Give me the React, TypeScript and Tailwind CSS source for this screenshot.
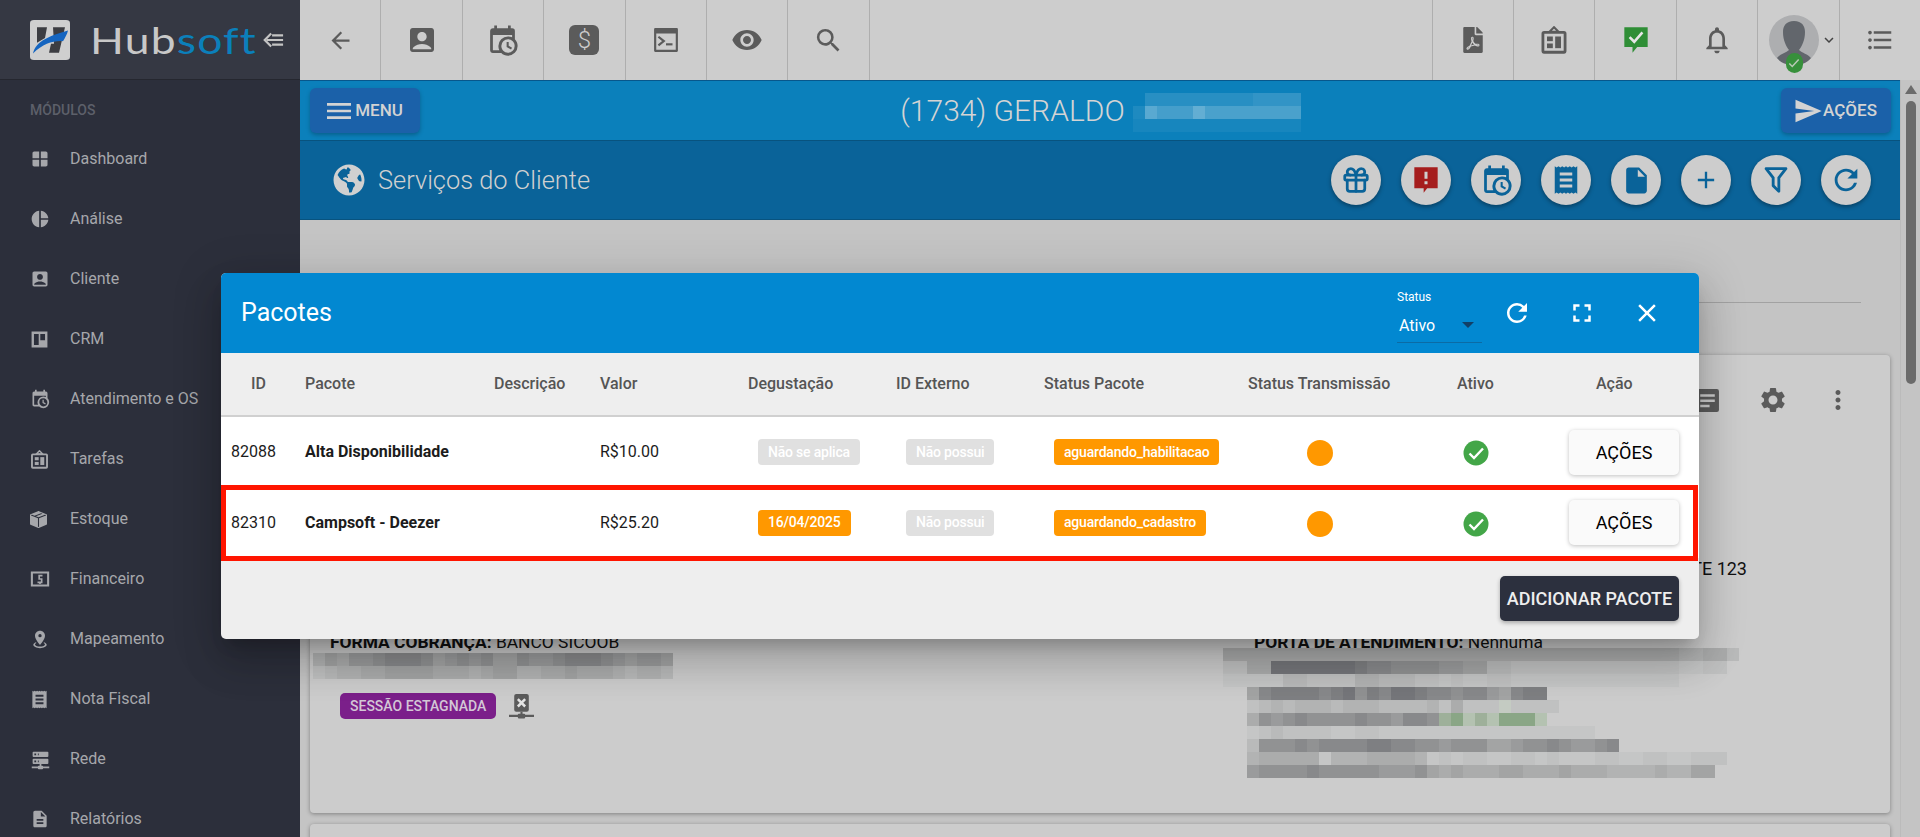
import { Gift } from "lucide-react";
import { BsBoxSeamFill } from "react-icons/bs";
import { FaFilePdf, FaGlobeAmericas } from "react-icons/fa";
import {
  MdAccountBox,
  MdAdd,
  MdArrowBack,
  MdClose,
  MdDescription,
  MdFormatListBulleted,
  MdFullscreen,
  MdInsertDriveFile,
  MdKeyboardArrowDown,
  MdMenu,
  MdOutlineNotifications,
  MdPieChart,
  MdRefresh,
  MdSearch,
  MdSend,
  MdSettings,
  MdMoreVert,
  MdVisibility,
  MdWindow,
} from "react-icons/md";

type IconProps = { className?: string };

const CalendarClock = ({ className }: IconProps) => (
  <svg viewBox="0 0 24 24" fill="currentColor" className={className}>
    <path d="M15,13H16.5V15.82L18.94,17.23L18.19,18.53L15,16.69V13M19,8H5V19H9.67C9.24,18.09 9,17.07 9,16A7,7 0 0,1 16,9C17.07,9 18.09,9.24 19,9.67V8M5,21C3.89,21 3,20.1 3,19V5C3,3.89 3.89,3 5,3H6V1H8V3H16V1H18V3H19A2,2 0 0,1 21,5V11.1C22.24,12.36 23,14.09 23,16A7,7 0 0,1 16,23C14.09,23 12.36,22.24 11.1,21H5M16,11.15A4.85,4.85 0 0,0 11.15,16C11.15,18.68 13.32,20.85 16,20.85A4.85,4.85 0 0,0 20.85,16C20.85,13.32 18.68,11.15 16,11.15Z" />
  </svg>
);

const Terminal = ({ className }: IconProps) => (
  <svg viewBox="0 0 24 24" className={className}>
    <path
      fill="currentColor"
      fillRule="evenodd"
      d="M2 1h20a1 1 0 0 1 1 1v20a1 1 0 0 1-1 1H2a1 1 0 0 1-1-1V2a1 1 0 0 1 1-1zm1 5v15h18V6H3z"
    />
    <path d="M5 9l5 4-5 4" fill="none" stroke="currentColor" strokeWidth="2" />
    <path d="M12 16h6" stroke="currentColor" strokeWidth="2" />
  </svg>
);

const Board = ({ className }: IconProps) => (
  <svg viewBox="0 0 24 24" fill="none" className={className}>
    <path d="M12 1L8 5h8z" stroke="currentColor" strokeWidth="1.8" />
    <rect x="2.5" y="5.5" width="19" height="17" rx="1" stroke="currentColor" strokeWidth="2.4" />
    <rect x="6" y="9" width="5" height="4" fill="currentColor" />
    <rect x="6" y="15" width="5" height="4" fill="currentColor" />
    <rect x="13" y="9" width="5" height="10" fill="currentColor" />
  </svg>
);

const ChatCheck = ({ className }: IconProps) => (
  <svg viewBox="0 0 24 24" className={className}>
    <path fill="currentColor" d="M2 1h20v17h-9l-4 5v-5H2z" />
    <path d="M6.5 9.5l4 4 7-8" fill="none" stroke="#e6e6e6" strokeWidth="2.2" />
  </svg>
);

const ChatAlert = ({ className }: IconProps) => (
  <svg viewBox="0 0 24 24" className={className}>
    <path fill="currentColor" d="M2 1h20v18h-9l-3 4v-4H2z" />
    <path d="M10.7 5h2.6v6h-2.6zM10.7 13h2.6v2.6h-2.6z" fill="#cfcfcf" />
  </svg>
);

const Receipt = ({ className }: IconProps) => (
  <svg viewBox="0 0 24 24" className={className}>
    <path
      fill="currentColor"
      fillRule="evenodd"
      d="M3 1l1.5 1L6 1l1.5 1L9 1l1.5 1L12 1l1.5 1L15 1l1.5 1L18 1l1.5 1L21 1v22l-1.5-1-1.5 1-1.5-1-1.5 1-1.5-1-1.5 1-1.5-1L9 23l-1.5-1L6 23l-1.5-1L3 23zM7 6v2.4h10V6zm0 4.8v2.4h10v-2.4zm0 4.8V18h10v-2.4z"
    />
  </svg>
);

const Kanban = ({ className }: IconProps) => (
  <svg viewBox="0 0 24 24" className={className}>
    <path
      fill="currentColor"
      fillRule="evenodd"
      d="M2 2h20v20H2zM5 5v14h6V5zm8 0v8h6V5z"
    />
  </svg>
);

const Money = ({ className }: IconProps) => (
  <svg viewBox="0 0 24 24" className={className}>
    <path
      fill="currentColor"
      fillRule="evenodd"
      d="M1 3h22v18H1zm2.5 2.5v13h17v-13zM10 7h5v2h-3v2h3v6h-2v1h-2v-1H9v-2h4v-2H10V7h1z"
    />
  </svg>
);

const MapPin = ({ className }: IconProps) => (
  <svg viewBox="0 0 24 24" fill="currentColor" className={className}>
    <path d="M12,2C15.31,2 18,4.66 18,7.95C18,12.41 12,19 12,19C12,19 6,12.41 6,7.95C6,4.66 8.69,2 12,2M12,6A2,2 0 0,0 10,8A2,2 0 0,0 12,10A2,2 0 0,0 14,8A2,2 0 0,0 12,6M20,19C20,21.21 16.42,23 12,23C7.58,23 4,21.21 4,19C4,17.71 5.22,16.56 7.11,15.83L7.75,16.74C6.67,17.19 6,17.81 6,18.5C6,19.88 8.69,21 12,21C15.31,21 18,19.88 18,18.5C18,17.81 17.33,17.19 16.25,16.74L16.89,15.83C18.78,16.56 20,17.71 20,19Z" />
  </svg>
);

const ServerNet = ({ className }: IconProps) => (
  <svg viewBox="0 0 24 24" fill="currentColor" className={className}>
    <path d="M13,19H14A1,1 0 0,1 15,20H22V22H15A1,1 0 0,1 14,23H10A1,1 0 0,1 9,22H2V20H9A1,1 0 0,1 10,19H11V17H4A1,1 0 0,1 3,16V12A1,1 0 0,1 4,11H20A1,1 0 0,1 21,12V16A1,1 0 0,1 20,17H13V19M4,3H20A1,1 0 0,1 21,4V8A1,1 0 0,1 20,9H4A1,1 0 0,1 3,8V4A1,1 0 0,1 4,3M9,7H10V5H9V7M9,15H10V13H9V15M5,5V7H7V5H5M5,13V15H7V13H5Z" />
  </svg>
);

const FunnelOutline = ({ className }: IconProps) => (
  <svg viewBox="0 0 24 24" fill="currentColor" className={className}>
    <path d="M15,19.88C15.04,20.18 14.94,20.5 14.71,20.71C14.32,21.1 13.69,21.1 13.3,20.71L9.29,16.7C9.06,16.47 8.96,16.16 9,15.87V10.75L4.21,4.62C3.87,4.19 3.95,3.56 4.38,3.22C4.57,3.08 4.78,3 5,3V3H19V3C19.22,3 19.43,3.08 19.62,3.22C20.05,3.56 20.13,4.19 19.79,4.62L15,10.75V19.88M7.04,5L11,10.06V15.58L13,17.58V10.05L16.96,5H7.04Z" />
  </svg>
);

const CollapseArrow = ({ className }: IconProps) => (
  <svg viewBox="0 0 24 24" fill="none" stroke="currentColor" strokeWidth="2.4" className={className}>
    <path d="M10 5L3 12l7 7" />
    <path d="M5 12h18M11 7h12M11 17h12" />
  </svg>
);

const NetworkOff = ({ className }: IconProps) => (
  <svg viewBox="0 0 24 24" className={className}>
    <rect x="5" y="0" width="14" height="17" rx="2" fill="currentColor" />
    <path d="M8.5 5l7 7M15.5 5l-7 7" stroke="#e4e4e4" strokeWidth="2.4" />
    <path d="M12 17v3M0 21h24" stroke="currentColor" strokeWidth="2" />
    <rect x="8.5" y="19" width="7" height="4.5" rx="1" fill="currentColor" />
  </svg>
);

const NotesBox = ({ className }: IconProps) => (
  <svg viewBox="0 0 24 24" className={className}>
    <path
      fill="currentColor"
      fillRule="evenodd"
      d="M3 1h18a2 2 0 0 1 2 2v18a2 2 0 0 1-2 2H3a2 2 0 0 1-2-2V3a2 2 0 0 1 2-2zm2 5v2.5h14V6zm0 5v2.5h14V11zm0 5v2.5h9V16z"
    />
  </svg>
);

const Avatar = () => (
  <div className="relative w-[50px] h-[50px] rounded-full bg-[#adaeb0] overflow-visible">
    <svg viewBox="0 0 50 50" className="w-[50px] h-[50px]">
      <path
        fill="#62666c"
        d="M25 6c8 0 11 5 11 11 0 8-3 14-6 18 3 3 9 4 12 8-4 5-10 7-17 7s-13-2-17-7c3-4 9-5 12-8-3-4-6-10-6-18 0-6 3-11 11-11z"
      />
    </svg>
    <span className="absolute left-[17px] top-[38px] w-[17px] h-[20px] rounded-full bg-[#37903b] flex items-center justify-center">
      <svg viewBox="0 0 24 24" className="w-[14px] h-[14px]" fill="none" stroke="#b9c9b6" strokeWidth="2.6">
        <path d="M4 13l5 5L20 6" />
      </svg>
    </span>
  </div>
);

const Logo = () => (
  <svg viewBox="0 0 40 49" className="w-[40px] h-[40px]" preserveAspectRatio="none">
    <rect width="40" height="49" rx="4" fill="#cfcfcf" />
    <path d="M7 9h10l-2 13-8 6zM23 9h12l-6 31H19l2-11h3z" fill="#3c3d42" />
    <path d="M3 41C6 26 20 19 38 13c-1 5-3 9-5 13-9-1-20 3-30 15z" fill="#1565c0" />
  </svg>
);

// mosaic of a blurred text, each char is one cell
const grays: Record<string, string> = {
  "0": "#75767a",
  "1": "#7e7f82",
  "2": "#88898b",
  "3": "#919293",
  "4": "#9a9b9c",
  "5": "#a3a4a4",
  "6": "#abacac",
  "7": "#b2b3b3",
  "8": "#b9baba",
  "9": "#c0c1c1",
  a: "#c5c6c6",
  b: "#c9caca",
  g: "#9eb09a",
  h: "#8aa686",
  i: "#b4c2b1",
  j: "#c4cbc2",
};

const Mosaic = ({ rows, className }: { rows: string[]; className?: string }) => {
  const cols = Math.max(...rows.map((r) => r.length));
  return (
    <svg
      viewBox={`0 0 ${cols * 12} ${rows.length * 13}`}
      width={cols * 12}
      height={rows.length * 13}
      shapeRendering="crispEdges"
      className={className}
    >
      {rows.map((row, y) =>
        row.split("").map((c, x) =>
          c === "." ? null : <rect key={`${x}-${y}`} x={x * 12} y={y * 13} width="12" height="13" fill={grays[c]} />,
        ),
      )}
    </svg>
  );
};

const menuItems = [
  { label: "Dashboard", icon: <MdWindow className="w-[20px] h-[20px]" /> },
  { label: "Análise", icon: <MdPieChart className="w-[20px] h-[20px]" /> },
  { label: "Cliente", icon: <MdAccountBox className="w-[20px] h-[20px]" /> },
  { label: "CRM", icon: <Kanban className="w-[19px] h-[19px]" /> },
  { label: "Atendimento e OS", icon: <CalendarClock className="w-[20px] h-[20px]" /> },
  { label: "Tarefas", icon: <Board className="w-[19px] h-[19px]" /> },
  { label: "Estoque", icon: <BsBoxSeamFill className="w-[17px] h-[17px]" /> },
  { label: "Financeiro", icon: <Money className="w-[20px] h-[20px]" /> },
  { label: "Mapeamento", icon: <MapPin className="w-[20px] h-[20px]" /> },
  { label: "Nota Fiscal", icon: <Receipt className="w-[19px] h-[19px]" /> },
  { label: "Rede", icon: <ServerNet className="w-[21px] h-[21px]" /> },
  { label: "Relatórios", icon: <MdDescription className="w-[20px] h-[20px]" /> },
];

const Sidebar = () => (
  <aside className="w-[300px] shrink-0 h-full bg-[#2c2f3b] flex flex-col overflow-hidden">
    <div className="h-[80px] shrink-0 bg-[#353843] border-b border-[#25272f] flex items-center pl-[30px]">
      <Logo />
      <div className="ml-[20px] w-[163px] shrink-0 text-[37px] leading-none tracking-[1px] font-['Lato',sans-serif] origin-left scale-x-[1.2]">
        <span className="text-[#c8c8c8]">Hub</span>
        <span className="text-[#0b80bb]">soft</span>
      </div>
      <CollapseArrow className="w-[22px] h-[22px] ml-[9px] text-[#c4c4c4]" />
    </div>
    <div className="pl-[30px] h-[49px] pt-[11px] shrink-0 flex items-center text-[14px] font-medium text-[#5d606a]">MÓDULOS</div>
    {menuItems.map((m) => (
      <div key={m.label} className="h-[60px] shrink-0 flex items-center text-[16px] text-[#a6a7ab]">
        <span className="w-[70px] pl-[30px] flex items-center justify-start">{m.icon}</span>
        {m.label}
      </div>
    ))}
  </aside>
);

const TopCell = ({ children, className }: { children?: React.ReactNode; className?: string }) => (
  <div className={`h-full w-[81.4px] shrink-0 border-r border-[#aeaeae] flex items-center justify-center ${className ?? "text-[#5b5b5b]"}`}>
    {children}
  </div>
);

const TopBar = () => (
  <div className="h-[80px] shrink-0 bg-[#cdcdcd] flex items-stretch">
    <TopCell><MdArrowBack className="w-[27px] h-[27px]" /></TopCell>
    <TopCell><MdAccountBox className="w-[32px] h-[32px]" /></TopCell>
    <TopCell><CalendarClock className="w-[33px] h-[33px]" /></TopCell>
    <TopCell>
      <div className="w-[30px] h-[30px] rounded-[6px] bg-[#5b5b5b] text-[#cdcdcd] text-[24px] font-light flex items-center justify-center">$</div>
    </TopCell>
    <TopCell><Terminal className="w-[26px] h-[26px]" /></TopCell>
    <TopCell><MdVisibility className="w-[32px] h-[32px]" /></TopCell>
    <TopCell><MdSearch className="w-[31px] h-[31px]" /></TopCell>
    <div className="flex-1 border-r border-[#aeaeae]" />
    <TopCell><FaFilePdf className="w-[22px] h-[26px]" /></TopCell>
    <TopCell><Board className="w-[28px] h-[28px]" /></TopCell>
    <TopCell className="text-[#2f8e36]"><ChatCheck className="w-[28px] h-[28px]" /></TopCell>
    <TopCell><MdOutlineNotifications className="w-[32px] h-[32px]" /></TopCell>
    <TopCell>
      <div className="flex items-center pl-[10px]">
        <Avatar />
        <MdKeyboardArrowDown className="w-[18px] h-[18px] ml-[1px] text-[#444]" />
      </div>
    </TopCell>
    <div className="w-[80.4px] shrink-0 flex items-center justify-center text-[#5b5b5b]">
      <MdFormatListBulleted className="w-[30px] h-[30px]" />
    </div>
  </div>
);

const BlueButton = ({ children }: { children: React.ReactNode }) => (
  <div className="h-[45px] w-[110px] rounded-[6px] bg-[#1b61a9] text-[#d3d3d3] text-[17px] font-medium flex items-center justify-center shadow-[0_2px_4px_rgba(0,0,0,0.25)]">
    {children}
  </div>
);

const RoundButton = ({ children, className }: { children: React.ReactNode; className?: string }) => (
  <div className={`w-[50px] h-[50px] rounded-full bg-[#cdcdcd] flex items-center justify-center shadow-[0_2px_4px_rgba(0,0,0,0.35)] ${className ?? "text-[#0a6399]"}`}>
    {children}
  </div>
);

const CustomerBar = () => (
  <div className="h-[60px] shrink-0 bg-[#0b80bb] border-t border-[#07578c] flex items-center justify-between pl-[10px] pr-[9px]">
    <BlueButton>
      <MdMenu className="w-[32px] h-[32px] -ml-[4px]" />
      MENU
    </BlueButton>
    <div className="flex items-center text-[30px] font-light text-[#d4d4d4]">
      <span>(1734) GERALDO</span>
      <svg width="168" height="39" shapeRendering="crispEdges" className="ml-[8px] mt-[3px]">
        <rect x="12" y="0" width="108" height="13" fill="#fff" opacity="0.12" />
        <rect x="120" y="0" width="48" height="13" fill="#fff" opacity="0.16" />
        <rect x="0" y="13" width="12" height="13" fill="#fff" opacity="0.08" />
        <rect x="12" y="13" width="12" height="13" fill="#fff" opacity="0.32" />
        <rect x="24" y="13" width="36" height="13" fill="#fff" opacity="0.24" />
        <rect x="60" y="13" width="12" height="13" fill="#fff" opacity="0.36" />
        <rect x="72" y="13" width="96" height="13" fill="#fff" opacity="0.26" />
        <rect x="0" y="26" width="168" height="13" fill="#fff" opacity="0.05" />
      </svg>
    </div>
    <BlueButton>
      <MdSend className="w-[30px] h-[30px] -ml-[2px]" />
      AÇÕES
    </BlueButton>
  </div>
);

const PageTitleBar = () => (
  <div className="h-[80px] shrink-0 bg-[#0a6399] border-t border-b border-[#08537f] flex items-center pl-[33px] pr-[29px]">
    <FaGlobeAmericas className="w-[32px] h-[32px] text-[#d0d0d0]" />
    <div className="ml-[13px] text-[25.4px] font-light text-[#d0d0d0]">Serviços do Cliente</div>
    <div className="ml-auto flex gap-[20px]">
      <RoundButton><Gift className="w-[30px] h-[30px]" strokeWidth={2.2} /></RoundButton>
      <RoundButton className="text-[#a51d1d]"><ChatAlert className="w-[28px] h-[28px]" /></RoundButton>
      <RoundButton><CalendarClock className="w-[33px] h-[33px]" /></RoundButton>
      <RoundButton><Receipt className="w-[30px] h-[30px]" /></RoundButton>
      <RoundButton><MdInsertDriveFile className="w-[31px] h-[31px]" /></RoundButton>
      <RoundButton><MdAdd className="w-[28px] h-[28px]" /></RoundButton>
      <RoundButton><FunnelOutline className="w-[34px] h-[34px]" /></RoundButton>
      <RoundButton><MdRefresh className="w-[34px] h-[34px]" /></RoundButton>
    </div>
  </div>
);

const ServiceCard = () => (
  <div className="h-[458px] shrink-0 rounded-[4px] bg-[#cccccc] shadow-[0_1px_4px_rgba(0,0,0,0.35)] pl-[20px] pr-[40px] text-[#111] text-[18px]">
    <div className="flex justify-end items-center gap-[40px] h-[90px] text-[#5b5b5b]">
      <NotesBox className="w-[25px] h-[25px] -mr-[2px]" />
      <MdSettings className="w-[30px] h-[30px] -mr-[5px]" />
      <MdMoreVert className="w-[30px] h-[30px] -mr-[3px]" />
    </div>
    <div className="h-[30px] mt-[108px] flex items-center justify-end pr-[103px]">TE 123</div>
    <div className="flex items-center h-[30px] mt-[44px] text-[17.4px]">
      <div className="w-[924px] shrink-0">
        <b className="font-bold">FORMA COBRANÇA:</b> BANCO SICOOB
      </div>
      <div>
        <b className="font-bold">PORTA DE ATENDIMENTO:</b> Nenhuma
      </div>
    </div>
    <div className="flex items-start -mt-[4px]">
      <div className="w-[913px] -ml-[17px] shrink-0">
        <Mosaic
          rows={[
            "756443222354343553443222345445",
            "987766555566676557766566678778",
          ]}
        />
        <div className="flex items-center mt-[14px] ml-[27px] gap-[13px]">
          <div className="h-[26px] px-[10px] rounded-[5px] bg-[#7b1f8a] text-[#d3c7d6] text-[14px] font-medium flex items-center">
            SESSÃO ESTAGNADA
          </div>
          <NetworkOff className="w-[25px] h-[25px] text-[#5b5b5b]" />
        </div>
      </div>
      <div className="-mt-[5px] -ml-[3px]">
        <Mosaic
          rows={[
            "6666666666666666666666666666666666666677668",
            "99660000000122333344558899999999999999aa99",
            "aaaaa8899997788899a9aa99aaaaaaaaaaaaaa",
            "..5211112103120012232245211",
            "..987877787778888796999j9999",
            "..6343233332334223ghigihhhi",
            "..a989999aa99aaaaaaaaaaaaaaaaaa",
            "..8333232222112233433355433234432",
            "..766666a77766667a9a99aa99a9aaa99aa99aa999",
            "..433332333334443565666556665666777767755",
          ]}
        />
      </div>
    </div>
  </div>
);

const columns = [69, 189, 106, 148, 148, 148, 204, 209, 117, 140];

const Badge = ({ children, className }: { children: React.ReactNode; className: string }) => (
  <span className={`inline-flex items-center h-[26px] px-[10px] rounded-[4px] text-[14px] font-medium tracking-[-0.2px] text-white ${className}`}>
    {children}
  </span>
);

const CheckDot = () => (
  <svg viewBox="0 0 26 26" className="w-[26px] h-[26px]">
    <circle cx="13" cy="13" r="12.5" fill="#43a648" />
    <path d="M6.5 13.5l4.5 4.5 9-9.5" fill="none" stroke="#fff" strokeWidth="2.4" />
  </svg>
);

const rows = [
  {
    id: "82088",
    name: "Alta Disponibilidade",
    value: "R$10.00",
    trial: "Não se aplica",
    trialClass: "bg-[#e0e0e0]",
    status: "aguardando_habilitacao",
  },
  {
    id: "82310",
    name: "Campsoft - Deezer",
    value: "R$25.20",
    trial: "16/04/2025",
    trialClass: "bg-[#ff9800]",
    status: "aguardando_cadastro",
  },
];

const PackagesModal = () => (
  <div className="absolute left-[221px] top-[273px] w-[1478px] h-[366px] rounded-[5px] bg-[#eeeeee] overflow-hidden z-10">
    <div className="h-[80px] bg-[#0288d1] flex items-center pl-[20px] text-white">
      <div className="text-[25px]">Pacotes</div>
      <div className="ml-auto w-[85px] h-[80px] mr-[217px]">
        <div className="text-[12px] pt-[17px] leading-[14px]">Status</div>
        <div className="flex items-center justify-between h-[33px] mt-[6px] text-[16px] pl-[2px] pr-[8px] border-b border-[#0b6ba5]">
          Ativo
          <span className="w-0 h-0 border-x-[6px] border-x-transparent border-t-[6px] border-t-[#123f66] mb-[3px]" />
        </div>
      </div>
    </div>
    <div className="absolute right-[37px] top-[25px] flex gap-[35px] text-white">
      <MdRefresh className="w-[30px] h-[30px]" />
      <MdFullscreen className="w-[30px] h-[30px]" />
      <MdClose className="w-[30px] h-[30px]" />
    </div>
    <table className="table-fixed w-full text-[16px] border-collapse">
      <colgroup>
        {columns.map((w, i) => (
          <col key={i} style={{ width: w }} />
        ))}
      </colgroup>
      <thead>
        <tr className="h-[63px] border-b-2 border-[#d0d0d0] text-left text-[#555]">
          <th className="font-medium pl-[30px]">ID</th>
          <th className="font-medium pl-[15px]">Pacote</th>
          <th className="font-medium pl-[15px]">Descrição</th>
          <th className="font-medium pl-[15px]">Valor</th>
          <th className="font-medium pl-[15px]">Degustação</th>
          <th className="font-medium pl-[15px]">ID Externo</th>
          <th className="font-medium pl-[15px]">Status Pacote</th>
          <th className="font-medium pl-[15px]">Status Transmissão</th>
          <th className="font-medium pl-[15px]">Ativo</th>
          <th className="font-medium pl-[37px]">Ação</th>
        </tr>
      </thead>
      <tbody className="bg-white text-[#1c1c1c]">
        {rows.map((r) => (
          <tr key={r.id} className="h-[71px]">
            <td className="pl-[10px]">{r.id}</td>
            <td className="pl-[15px] font-bold">{r.name}</td>
            <td />
            <td className="pl-[15px]">{r.value}</td>
            <td className="pl-[25px]"><Badge className={r.trialClass}>{r.trial}</Badge></td>
            <td className="pl-[25px]"><Badge className="bg-[#e0e0e0]">Não possui</Badge></td>
            <td className="pl-[25px]"><Badge className="bg-[#ff9800]">{r.status}</Badge></td>
            <td className="pl-[74px]"><div className="w-[26px] h-[26px] rounded-full bg-[#ff9800] mt-[2px]" /></td>
            <td className="pl-[21px]"><div className="mt-[2px]"><CheckDot /></div></td>
            <td className="pl-[10px]">
              <button className="w-[110px] h-[45px] rounded-[5px] bg-[#fafafa] text-black text-[18px] font-normal shadow-[0_1px_4px_rgba(0,0,0,0.25)]">
                AÇÕES
              </button>
            </td>
          </tr>
        ))}
      </tbody>
    </table>
    <div className="flex justify-end pt-[18px] pr-[20px]">
      <button className="w-[179px] h-[45px] rounded-[5px] bg-[#2c303e] text-[#eeeeee] text-[18px] font-medium shadow-[0_2px_4px_rgba(0,0,0,0.3)]">
        ADICIONAR PACOTE
      </button>
    </div>
    {/* destaque vermelho da linha */}
    <div className="absolute left-0 top-[212px] w-[1477px] h-[76px] border-[5px] border-[#ff1500] pointer-events-none" />
  </div>
);

export default function App() {
  return (
    <div className="relative w-[1920px] h-[837px] overflow-hidden flex font-['Roboto',sans-serif] bg-[#c4c4c4]">
      <Sidebar />
      <main className="flex-1 min-w-0 flex flex-col">
        <TopBar />
        <div className="flex-1 flex min-h-0">
          <div className="flex-1 min-w-0 flex flex-col">
            <CustomerBar />
            <PageTitleBar />
            <div className="flex-1 bg-[#c4c4c4] px-[10px] pt-[135px] flex flex-col gap-[11px]">
              <ServiceCard />
              <div className="h-[40px] shrink-0 rounded-[4px] bg-[#cccccc] shadow-[0_1px_4px_rgba(0,0,0,0.35)]" />
            </div>
          </div>
          <div className="w-[20px] shrink-0 bg-[#c4c4c4] flex flex-col items-center border-l border-[#bbbbbb]">
            <span className="mt-[5px] w-0 h-0 border-x-[6px] border-x-transparent border-b-[9px] border-b-[#6b6b6b]" />
            <span className="mt-[7px] w-[10px] h-[283px] rounded-full bg-[#6b6b6b]" />
          </div>
        </div>
      </main>
      {/* linha de abas atras do modal */}
      <div className="absolute left-[1699px] top-[302px] w-[162px] h-px bg-[#a2a2a2]" />
      <div className="absolute left-[221px] top-[273px] w-[1478px] h-[366px] rounded-[5px] z-[5] pointer-events-none shadow-[0_11px_15px_-7px_rgba(0,0,0,0.2),0_24px_38px_3px_rgba(0,0,0,0.14),0_9px_46px_8px_rgba(0,0,0,0.12)]" />
      <PackagesModal />
    </div>
  );
}
